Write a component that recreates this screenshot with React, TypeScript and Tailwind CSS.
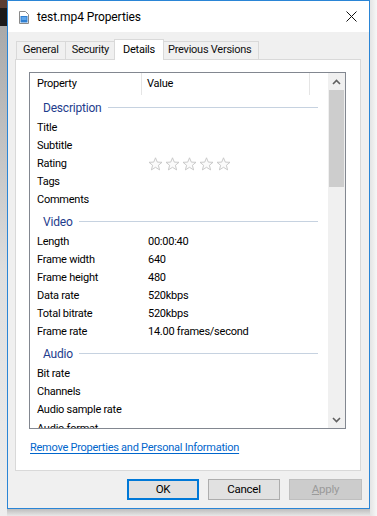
import React from 'react';

type Row = { label: string; value?: string; stars?: boolean };
type Group = { title: string; rows: Row[] };

const groups: Group[] = [
  {
    title: 'Description',
    rows: [
      { label: 'Title' },
      { label: 'Subtitle' },
      { label: 'Rating', stars: true },
      { label: 'Tags' },
      { label: 'Comments' },
    ],
  },
  {
    title: 'Video',
    rows: [
      { label: 'Length', value: '00:00:40' },
      { label: 'Frame width', value: '640' },
      { label: 'Frame height', value: '480' },
      { label: 'Data rate', value: '520kbps' },
      { label: 'Total bitrate', value: '520kbps' },
      { label: 'Frame rate', value: '14.00 frames/second' },
    ],
  },
  {
    title: 'Audio',
    rows: [
      { label: 'Bit rate' },
      { label: 'Channels' },
      { label: 'Audio sample rate' },
    ],
  },
];

const tabs = ['General', 'Security', 'Details', 'Previous Versions'];

function Star() {
  return (
    <svg width="15" height="14" viewBox="0 0 15 14" className="mr-[2px]">
      <path
        d="M7.5 0.8 L9.3 5.1 L14 5.3 L10.4 8.3 L11.6 12.9 L7.5 10.3 L3.4 12.9 L4.6 8.3 L1 5.3 L5.7 5.1 Z"
        fill="#fbfbfb"
        stroke="#c4c4c4"
        strokeWidth="0.9"
        strokeLinejoin="round"
      />
    </svg>
  );
}

function FileIcon() {
  return (
    <svg width="10" height="13" viewBox="0 0 10 13">
      <path d="M0.5 0.5 H6.5 L9.5 3.5 V12.5 H0.5 Z" fill="#ffffff" stroke="#8a8a8a" />
      <rect x="1.5" y="5" width="7" height="6.5" fill="#2f7fd1" />
      <rect x="2.5" y="6" width="5" height="3" fill="#5fa6ea" />
    </svg>
  );
}

export default function App() {
  return (
    <div
      className="flex w-[377px] h-[516px] overflow-hidden bg-[#ececec] text-[11px] tracking-[-0.25px] text-black"
      style={{ fontFamily: 'Roboto, "Liberation Sans", sans-serif' }}
    >
      {/* desktop strip left */}
      <div className="w-[7px] shrink-0 flex flex-col">
        <div className="h-[8px] bg-[#5b3d33]" />
        <div className="h-[18px] bg-[#1c1a1a]" />
        <div className="flex-1 bg-gradient-to-b from-[#a9a9a9] via-[#dedede] to-[#eeeeee]" />
      </div>

      <div className="flex flex-col w-[363px] shrink-0">
        {/* window */}
        <div className="h-[509px] border border-[#2a85d6] bg-[#f0f0f0] flex flex-col">
          {/* title bar */}
          <div className="h-[31px] bg-white flex items-center shrink-0">
            <div className="ml-[11px] mt-[1px]">
              <FileIcon />
            </div>
            <span className="ml-[8px] text-[12px] tracking-[-0.1px]">test.mp4 Properties</span>
            <svg width="11" height="11" viewBox="0 0 11 11" className="ml-auto mr-[12px]">
              <path d="M0.5 0.5 L10.5 10.5 M10.5 0.5 L0.5 10.5" stroke="#111" strokeWidth="1" />
            </svg>
          </div>

          {/* tabs */}
          <div className="flex items-end h-[27px] pl-[8px] shrink-0">
            {tabs.map((t) =>
              t === 'Details' ? (
                <div
                  key={t}
                  className="relative z-10 -mx-[2px] -mb-[1px] h-[21px] px-[8px] bg-white border border-b-0 border-[#d9d9d9] flex items-start pt-[2px]"
                >
                  {t}
                </div>
              ) : (
                <div
                  key={t}
                  className="h-[18px] px-[6px] bg-[#f0f0f0] border border-b-0 border-[#d9d9d9] -ml-[1px] first:ml-0 flex items-center text-[#111]"
                >
                  {t}
                </div>
              )
            )}
          </div>

          {/* tab panel */}
          <div className="ml-[7px] w-[346px] h-[412px] bg-white border border-[#d9d9d9] shrink-0">
            <div className="mt-[12px] ml-[13px] w-[317px] h-[357px] border border-[#828790] flex">
              <div className="flex-1 overflow-hidden">
                {/* header */}
                <div className="h-[22px] flex items-center">
                  <div className="w-[112px] pl-[7px] h-full flex items-center border-r border-[#e5e5e5]">Property</div>
                  <div className="w-[168px] pl-[5px] h-full flex items-center border-r border-[#e5e5e5]">Value</div>
                </div>
                {groups.map((g) => (
                  <div key={g.title}>
                    <div className="h-[24px] flex items-center pl-[13px] pr-[10px] pt-[1px]">
                      <span className="text-[#1e3c8c] text-[12px] tracking-[-0.2px]">{g.title}</span>
                      <div className="flex-1 h-px bg-[#c6d2e0] ml-[6px]" />
                    </div>
                    {g.rows.map((r) => (
                      <div key={r.label} className="h-[18px] flex items-center">
                        <div className="w-[112px] pl-[7px] shrink-0 whitespace-nowrap">{r.label}</div>
                        <div className="pl-[6px] flex items-center whitespace-nowrap">
                          {r.stars ? (
                            <>
                              <Star />
                              <Star />
                              <Star />
                              <Star />
                              <Star />
                            </>
                          ) : (
                            r.value
                          )}
                        </div>
                      </div>
                    ))}
                  </div>
                ))}
                {/* next row, scrolled mostly out of view */}
                <div className="h-[18px] flex items-center pl-[7px] pt-[3px] whitespace-nowrap">Audio format</div>
              </div>
              {/* scrollbar */}
              <div className="w-[17px] shrink-0 bg-[#f0f0f0] flex flex-col">
                <div className="h-[17px] flex items-center justify-center">
                  <svg width="9" height="6" viewBox="0 0 9 6">
                    <path d="M1 5 L4.5 1.5 L8 5" stroke="#606060" strokeWidth="1.6" fill="none" />
                  </svg>
                </div>
                <div className="mx-[1px] h-[97px] bg-[#cdcdcd]" />
                <div className="flex-1" />
                <div className="h-[17px] flex items-center justify-center">
                  <svg width="9" height="6" viewBox="0 0 9 6">
                    <path d="M1 1 L4.5 4.5 L8 1" stroke="#606060" strokeWidth="1.6" fill="none" />
                  </svg>
                </div>
              </div>
            </div>
            <div className="mt-[11px] ml-[14px]">
              <span className="text-[#0066cc] underline underline-offset-[2px]">
                Remove Properties and Personal Information
              </span>
            </div>
          </div>

          {/* buttons */}
          <div className="flex justify-end gap-[9px] pr-[7px] mt-[8px] text-[11.5px]">
            <button className="w-[72px] h-[21px] bg-[#e1e1e1] border-2 border-[#0078d7] flex items-center justify-center">
              OK
            </button>
            <button className="w-[72px] h-[21px] bg-[#e1e1e1] border border-[#adadad] flex items-center justify-center">
              Cancel
            </button>
            <button className="w-[73px] h-[21px] bg-[#cccccc] border border-[#bfbfbf] text-[#9a9a9a] flex items-center justify-center">
              <span>
                <span className="underline">A</span>pply
              </span>
            </button>
          </div>
        </div>
        <div className="flex-1 bg-gradient-to-b from-[#bdbdbd] to-[#e8e8e8]" />
      </div>

      <div className="flex-1 bg-gradient-to-r from-[#e4e4e4] to-[#f7f7f7]" />
    </div>
  );
}
